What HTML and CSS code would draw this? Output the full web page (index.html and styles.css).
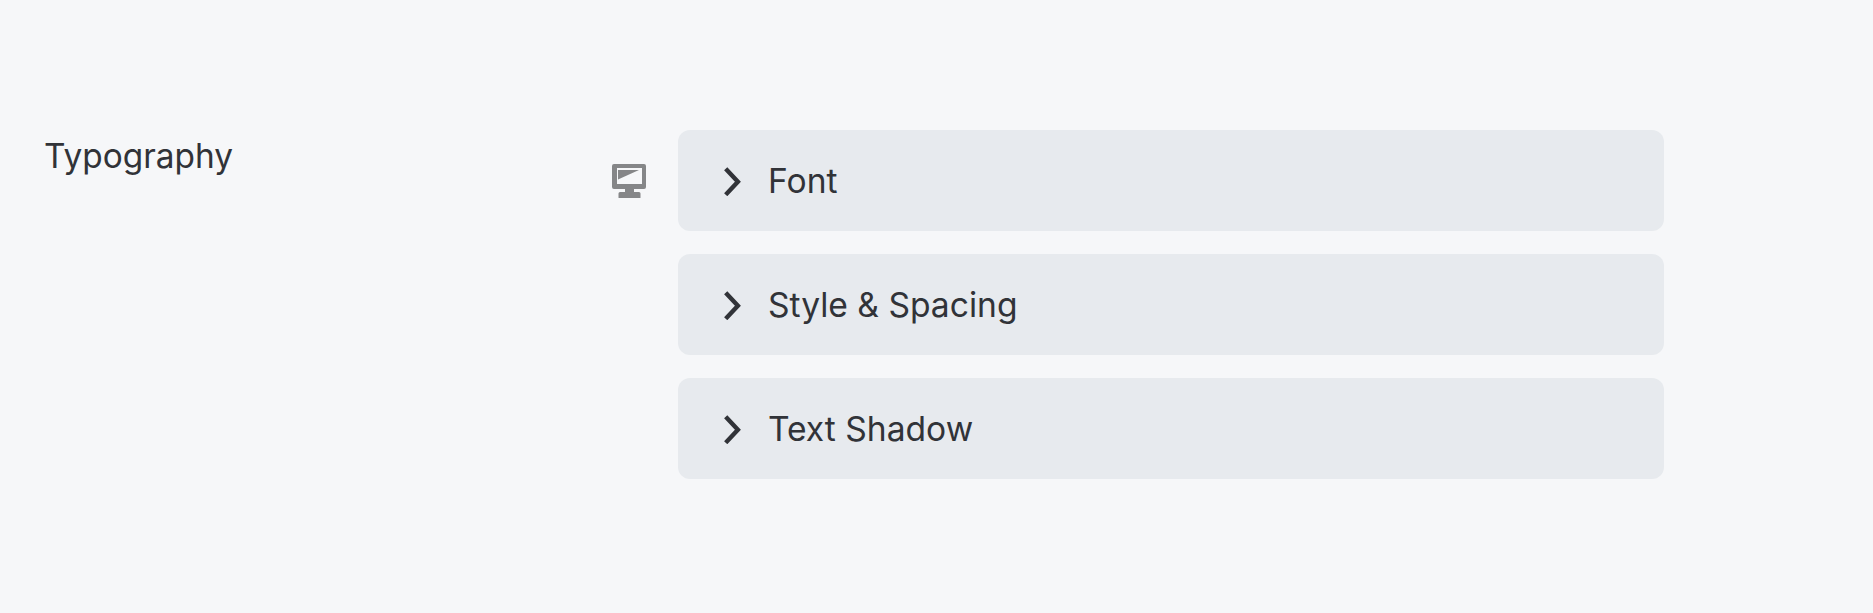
FILE: index.html
```html
<!DOCTYPE html>
<html lang="en">
<head>
<meta charset="utf-8">
<title>Typography</title>
<link rel="stylesheet" href="styles.css">
</head>
<body>
<section class="row">
  <h2 class="label">Typography</h2>
  <div class="device">
    <svg class="monitor" viewBox="0 0 34 35" width="34" height="35" aria-hidden="true">
      <path fill="#858688" fill-rule="evenodd" d="M2 0h30a2 2 0 0 1 2 2v21a2 2 0 0 1-2 2H22v3h5a1.500 1.500 0 0 1 1.500 1.500v4a.500.500 0 0 1-.500.500H7a.500.500 0 0 1-.500-.500v-4A1.500 1.500 0 0 1 8 28h5v-3H2a2 2 0 0 1-2-2V2a2 2 0 0 1 2-2zM5 4v16h25V4z"/>
      <path fill="#858688" d="M6 6h21L6 15.500z"/>
    </svg>
  </div>
  <div class="panels">
    <div class="panel">
      <svg class="chev" viewBox="0 0 20 30" width="20" height="30" aria-hidden="true"><path d="M3.700 2.700L15.900 15.700 3.700 28.700" fill="none" stroke="#313338" stroke-width="4.400"/></svg>
      <span>Font</span>
    </div>
    <div class="panel">
      <svg class="chev" viewBox="0 0 20 30" width="20" height="30" aria-hidden="true"><path d="M3.700 2.700L15.900 15.700 3.700 28.700" fill="none" stroke="#313338" stroke-width="4.400"/></svg>
      <span>Style &amp; Spacing</span>
    </div>
    <div class="panel">
      <svg class="chev" viewBox="0 0 20 30" width="20" height="30" aria-hidden="true"><path d="M3.700 2.700L15.900 15.700 3.700 28.700" fill="none" stroke="#313338" stroke-width="4.400"/></svg>
      <span>Text Shadow</span>
    </div>
  </div>
</section>
</body>
</html>
```
FILE: styles.css
```css
html, body {
  margin: 0;
  height: 100%;
}
body {
  background: #f6f7f9;
  color: #313338;
  font-family: Inter, "Liberation Sans", sans-serif;
  overflow: hidden;
}
.row {
  display: flex;
  align-items: flex-start;
  padding: 130px 0 0 44px;
}
.label {
  width: 568px;
  margin: 1px 0 0;
  font-size: 33.400px;
  font-weight: 400;
  line-height: 50px;
}
.device {
  display: flex;
  width: 66px;
  padding-top: 34px;
}
.monitor {
  display: block;
}
.panels {
  display: flex;
  flex-direction: column;
  gap: 23px;
  width: 986px;
}
.panel {
  display: flex;
  align-items: center;
  gap: 26px;
  height: 101px;
  padding-left: 44px;
  box-sizing: border-box;
  background: #e7eaee;
  border-radius: 12px;
  font-size: 33.600px;
  line-height: 40px;
}
.panel span {
  padding-top: 1px;
}
.chev {
  display: block;
}
```
